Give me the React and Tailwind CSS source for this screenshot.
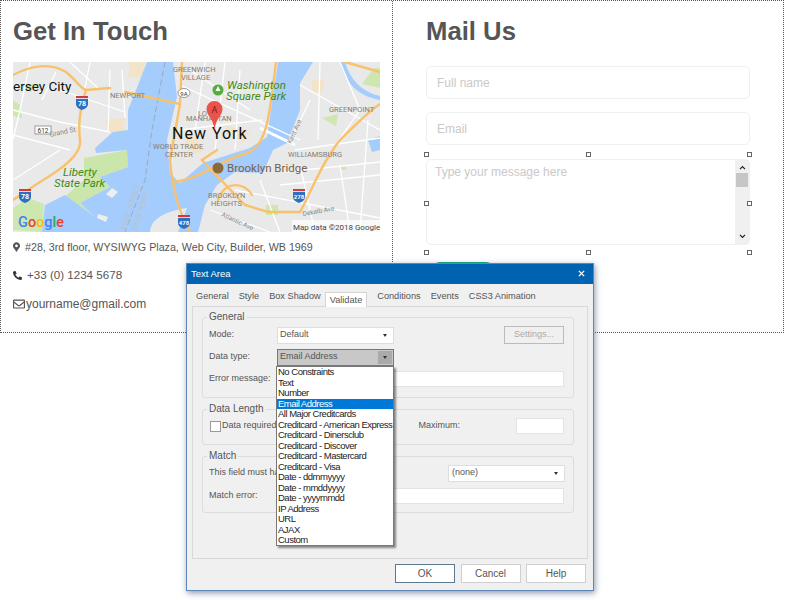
import { FaMapMarkerAlt, FaPhoneAlt, FaRegEnvelope } from 'react-icons/fa';

const dataTypes = [
  'No Constraints', 'Text', 'Number', 'Email Address', 'All Major Creditcards',
  'Creditcard - American Express', 'Creditcard - Dinersclub', 'Creditcard - Discover',
  'Creditcard - Mastercard', 'Creditcard - Visa', 'Date - ddmmyyyy', 'Date - mmddyyyy',
  'Date - yyyymmdd', 'IP Address', 'URL', 'AJAX', 'Custom',
];

const tabs = ['General', 'Style', 'Box Shadow', 'Validate', 'Conditions', 'Events', 'CSS3 Animation'];

function Shield({ x, y, label }) {
  return (
    <g>
      <path d={`M${x} ${y}h12v8c0 3-3 5-6 6c-3-1-6-3-6-6z`} fill="#2f6fc0" />
      <rect x={x} y={y} width="12" height="2" fill="#d23a3a" />
      <rect x={x} y={y + 2} width="12" height="0.8" fill="#fff" />
      <text x={x + 6} y={y + 9.5} fontSize={label.length > 2 ? 6 : 7} fontWeight="700" fill="#ffffff" textAnchor="middle">{label}</text>
    </g>
  );
}

function MapPicture() {
  return (
    <svg viewBox="13 62 367 170" className="w-[367px] h-[170px] block font-['Roboto',sans-serif]">
      <rect x="13" y="62" width="367" height="170" fill="#e9e9e9" />
      {/* parks and built up areas */}
      <path d="M77 218 L62 200 L72 190 L84 180 L84 158 L127 150 L128 167 L100 177 L110 187 L80 203 L95 217 Z" fill="#cbe6ab" />
      <path d="M13 230 L13 208 L28 198 L44 204 L42 232 Z" fill="#cde7b0" />
      <path d="M13 100 L20 105 L22 118 L13 116 Z M20 84 L40 84 L30 92 Z M374 68 L380 68 L380 88 L362 84 Z M322 118 L338 114 L336 126 Z M266 205 L278 205 L278 215 L266 215 Z M340 165 L346 165 L346 170 L340 170 Z" fill="#cfe6b0" />
      <path d="M130 62 L145 62 L143 78 L128 76 Z M105 120 L125 118 L122 140 L108 132 Z M312 80 L324 80 L322 94 L312 92 Z M190 130 L205 150 L195 155 L184 140 Z M225 125 L250 132 L244 142 L228 136 Z" fill="#f3e3c8" />
      {/* water */}
      <path d="M147 62 L140 80 L128 110 L128 130 L113 132 L95 148 L96 153 L127 150 L128 167 L100 177 L110 187 L80 203 L95 217 L65 195 L45 205 L42 232 L198 232 L205 205 L217 185 L235 172 L263 173 L273 150 L287 143 L300 110 L300 83 L313 62 L278 62 L272 103 L267 137 L250 148 L203 163 L180 183 L170 173 L167 140 L177 97 L173 62 Z" fill="#a4ccfd" />
      <path d="M345 62 C350 80 362 92 380 96 L380 100 C358 96 346 84 340 62 Z M368 140 L380 136 L380 150 L372 152 Z" fill="#a4ccfd" />
      <path d="M150 232 C150 222 160 212 187 208 L178 232 Z" fill="#e9e9e9" />
      <path d="M98 214 L108 217 L106 222 L97 218 Z M112 188 L118 192 L112 198 L106 194 Z" fill="#eeeeee" />
      {/* state border */}
      <path d="M165 62 L152 130 L145 180 L125 232" stroke="#9ca9b8" strokeWidth="1" strokeDasharray="6 3" fill="none" />
      {/* streets */}
      <g stroke="#fff" strokeWidth="1.3" fill="none">
        <path d="M13 110 L60 122 L110 132 M30 62 L20 110 L13 140 M60 90 L125 112 M42 100 L56 72 M13 135 L70 150 M110 70 L108 132 M122 70 L125 118 M180 85 L300 140 M190 70 L250 110 M205 62 L195 130 M225 62 L215 150 M240 70 L235 150 M180 130 L262 120 M13 180 L60 150 M70 62 L100 90 M90 62 L85 88" />
        <path d="M300 85 L380 130 M310 100 L290 142 M340 62 L360 110 L332 150 M295 150 L380 138 M285 172 L380 162 M280 185 L380 175 M235 190 L380 218 M260 180 L280 232 M300 165 L315 232 M340 165 L350 232 M210 210 L270 232 M368 120 L360 232 M320 62 L318 140" />
      </g>
      <path d="M260 128 L295 145" stroke="#fff" strokeWidth="3" fill="none" />
      {/* highways */}
      <g stroke="#f8c26c" strokeWidth="2.4" fill="none" strokeLinecap="round">
        <path d="M13 75 C30 66 50 62 66 72 C76 80 82 90 86 90 L110 88" />
        <path d="M86 90 C80 108 78 125 80 140 C82 155 60 170 40 182 L13 200" />
        <path d="M125 92 L180 104 M182 62 L180 104 L170 160 C172 185 178 210 190 232" />
        <path d="M172 182 C200 180 220 160 245 154 C268 148 270 110 276 62" />
        <path d="M202 160 L240 200 L245 205 L268 212 L300 212 C310 195 320 165 340 140 C355 125 370 110 380 104" />
        <path d="M218 200 C225 180 245 182 252 195" />
        <path d="M345 62 L380 72 M217 150 L202 160" />
      </g>
      <Shield x={76} y={96} label="78" />
      <Shield x={19} y={189} label="78" />
      <Shield x={178} y={215} label="478" />
      <Shield x={293} y={189} label="278" />
      <rect x="35" y="126" width="16" height="8" fill="#fff" stroke="#777" strokeWidth="0.7" />
      <text x="43" y="133" fontSize="6.5" fill="#333" textAnchor="middle">612</text>
      <ellipse cx="184" cy="93" rx="6" ry="4.5" fill="#fff" stroke="#777" strokeWidth="0.7" />
      <text x="184" y="96" fontSize="6" fill="#333" textAnchor="middle">9A</text>
      {/* labels */}
      <text x="13" y="91" fontSize="13.5" fill="#111">ersey City</text>
      <g fontSize="7.5" fill="#8a7b6b">
        <text x="110" y="98">NEWPORT</text>
        <text x="173" y="72">GREENWICH</text>
        <text x="181" y="79.5">VILLAGE</text>
        <text x="329" y="112">GREENPOINT</text>
        <text x="288" y="157">WILLIAMSBURG</text>
        <text x="153" y="149">WORLD TRADE</text>
        <text x="165" y="157">CENTER</text>
        <text x="208" y="198">BROOKLYN</text>
        <text x="211" y="206">HEIGHTS</text>
        <text x="198" y="116">LO</text>
        <text x="186" y="121">MANHATTAN</text>
      </g>
      <g fontSize="11.5" fill="#3f8a14" fontStyle="italic">
        <text x="227" y="89">Washington</text>
        <text x="226" y="100">Square Park</text>
        <text x="63" y="176">Liberty</text>
        <text x="54" y="187">State Park</text>
      </g>
      <circle cx="218" cy="90" r="5.5" fill="#4fae3c" />
      <path d="M218 86 l-2.5 5 h5z" fill="#fff" />
      <text x="172" y="139" fontSize="16" fill="#111" letterSpacing="1">New York</text>
      <circle cx="218" cy="168" r="5.5" fill="#8a6a3d" />
      <text x="227" y="172" fontSize="11.5" fill="#76614a">Brooklyn Bridge</text>
      <text x="50" y="137" fontSize="7" fill="#888" transform="rotate(-12 50 137)">Grand St</text>
      <text x="303" y="216" fontSize="6.5" fill="#888" transform="rotate(-10 303 216)">Dekalb Ave</text>
      <text x="221" y="216" fontSize="6.5" fill="#888" transform="rotate(25 221 216)">Atlantic Ave</text>
      <text x="291" y="144" fontSize="6.5" fill="#888" transform="rotate(-65 291 144)">Kent Ave</text>
      <text x="126" y="230" fontSize="8" fill="#b8c4cf" transform="rotate(-72 126 230)">NEW JERSEY</text>
      <text x="137" y="231" fontSize="8" fill="#b8c4cf" transform="rotate(-72 137 231)">NEW YORK</text>
      {/* marker */}
      <path d="M215 163 C215 150 207 147 207 140 a8 8 0 0 1 16 0 C223 147 215 150 215 163 Z" transform="translate(-0.5 -31)" fill="#e8534a" />
      <text x="214.5" y="113" fontSize="9" fill="#7a1f1a" textAnchor="middle">A</text>
      {/* footer */}
      <rect x="292" y="220" width="88" height="12" fill="#fff" fillOpacity="0.7" />
      <text x="293" y="230" fontSize="8" fill="#444">Map data ©2018 Google</text>
      <text x="18" y="227" fontSize="14.5" fontWeight="500">
        <tspan fill="#4285f4">G</tspan><tspan fill="#ea4335">o</tspan><tspan fill="#fbbc05">o</tspan><tspan fill="#4285f4">g</tspan><tspan fill="#34a853">l</tspan><tspan fill="#ea4335">e</tspan>
      </text>
    </svg>
  );
}

function Handle({ className }) {
  return <span className={`absolute w-[5px] h-[5px] border border-[#666] bg-white ${className}`} />;
}

function ContactLine({ icon, children, className }) {
  return (
    <div className={`flex items-center text-[#555] ${className}`}>
      {icon}
      <span>{children}</span>
    </div>
  );
}

function GroupBox({ title, className, children }) {
  return (
    <fieldset className={`border border-[#dcdcdc] rounded-[3px] ml-[9px] mr-[13px] px-[6px] ${className}`}>
      <legend className="-ml-[2px] px-[2px] text-[10px] leading-[10px] text-[#555]">{title}</legend>
      {children}
    </fieldset>
  );
}

function Caret() {
  return <span className="w-0 h-0 border-x-[2.5px] border-x-transparent border-t-[3px] border-t-[#333]" />;
}

function TextArea() {
  return (
    <div className="relative mt-[14px] h-[86px] w-[324px] border border-[#edf1f0] rounded-[5px] flex">
      <div className="flex-1 pl-[8px] pt-[3px] text-[12px] text-[#c9c9c9]">Type your message here</div>
      <div className="w-[14px] bg-[#f0f0f0] flex flex-col items-center justify-between text-[#222]">
        <div className="w-full flex flex-col items-center">
          <svg viewBox="0 0 8 6" className="w-[7px] h-[5px] mt-[5px]"><path d="M1 5 L4 2 L7 5" fill="none" stroke="#222" strokeWidth="1.5" /></svg>
          <div className="w-[12px] h-[14px] bg-[#c6c6c6] mt-[3px]" />
        </div>
        <svg viewBox="0 0 8 6" className="w-[7px] h-[5px] mb-[5px]"><path d="M1 1 L4 4 L7 1" fill="none" stroke="#222" strokeWidth="1.5" /></svg>
      </div>
      <Handle className="-left-[3px] -top-[8px]" />
      <Handle className="left-[159px] -top-[8px]" />
      <Handle className="-right-[3px] -top-[8px]" />
      <Handle className="-left-[3px] top-[41px]" />
      <Handle className="-right-[3px] top-[41px]" />
      <Handle className="-left-[3px] top-[90px]" />
      <Handle className="left-[159px] top-[90px]" />
      <Handle className="-right-[3px] top-[90px]" />
    </div>
  );
}

function Dialog() {
  return (
    <div className="absolute left-[186px] top-[263px] w-[408px] h-[328px] bg-[#f0f0f0] border border-[#5b86b5] shadow-[1px_2px_6px_rgba(40,70,110,0.55)] flex flex-col text-[9px] text-[#555] font-['Liberation_Sans',sans-serif]">
      <div className="h-[20px] bg-[#0063b1] text-white flex items-center justify-between pl-[4px] pr-[8px] shrink-0">
        <span className="text-[9.5px]">Text Area</span>
        <svg viewBox="0 0 8 8" className="w-[7px] h-[7px] mb-[2px]"><path d="M1 1 L7 7 M7 1 L1 7" stroke="#fff" strokeWidth="1.6" /></svg>
      </div>
      <div className="flex items-end h-[22px] pl-[4px] shrink-0">
        {tabs.map((t) => (
          <div
            key={t}
            className={t === 'Validate'
              ? 'h-[15px] mb-[-1px] z-10 bg-white border border-b-0 border-[#d5d5d5] px-[4px] mr-[5px] ml-[-1px] text-[9.2px] leading-[15px] whitespace-nowrap'
              : 'h-[15px] px-[5px] text-[9.2px] leading-[11px] whitespace-nowrap'}
          >
            {t}
          </div>
        ))}
      </div>
      <div className="relative mx-[5px] h-[253px] border border-[#d9d9d9] pt-[5px]">
        <GroupBox title="General" className="h-[86px]">
          <div className="flex items-center h-[18px] mt-[4px]">
            <span className="w-[68px]">Mode:</span>
            <div className="w-[117px] h-[17px] bg-white border border-[#dedede] flex items-center justify-between pl-[2px] pr-[6px]">
              Default<Caret />
            </div>
            <div className="ml-auto w-[60px] h-[18px] mr-[3px] border border-[#bbb] bg-[#f0f0f0] flex items-center justify-center text-[#aaa]">Settings...</div>
          </div>
          <div className="flex items-center h-[18px] mt-[4px]">
            <span className="w-[68px]">Data type:</span>
            <div className="w-[117px] h-[17px] bg-[#c8c8c8] border border-[#777] flex items-center justify-between pl-[2px]">
              Email Address
              <span className="w-[14px] h-[13px] mr-[1px] bg-[#aaa] flex items-center justify-center"><Caret /></span>
            </div>
          </div>
          <div className="flex items-center h-[16px] mt-[5px]">
            <span className="w-[68px] whitespace-nowrap">Error message:</span>
            <div className="w-[287px] h-[16px] bg-white border border-[#e3e3e3]" />
          </div>
        </GroupBox>
        <GroupBox title="Data Length" className="h-[41px] mt-[6px]">
          <div className="flex items-center h-[16px] mt-[4px]">
            <span className="w-[11px] h-[11px] ml-[1px] bg-white border border-[#999] shrink-0" />
            <span className="ml-[1px] whitespace-nowrap">Data required</span>
            <span className="ml-auto mr-[56px]">Maximum:</span>
            <div className="w-[48px] h-[16px] mr-[3px] bg-white border border-[#e3e3e3]" />
          </div>
        </GroupBox>
        <GroupBox title="Match" className="h-[62px] mt-[6px]">
          <div className="flex items-center h-[16px] mt-[4px]">
            <span className="whitespace-nowrap">This field must have</span>
            <div className="ml-auto w-[117px] h-[17px] mr-[2px] bg-white border border-[#dedede] flex items-center justify-between pl-[3px] pr-[6px]">
              (none)<Caret />
            </div>
          </div>
          <div className="flex items-center h-[16px] mt-[7px]">
            <span className="w-[68px]">Match error:</span>
            <div className="w-[287px] h-[16px] bg-white border border-[#e3e3e3]" />
          </div>
        </GroupBox>
        <div className="absolute left-[83px] top-[59px] w-[118px] h-[180px] bg-white border border-[#777] shadow-[2px_2px_2px_rgba(0,0,0,0.45)] text-[9.5px] tracking-[-0.5px] text-[#222]">
          {dataTypes.map((d) => (
            <div key={d} className={d === 'Email Address' ? 'h-[10.5px] leading-[10.5px] pl-[1px] bg-[#0078d7] text-white whitespace-nowrap' : 'h-[10.5px] leading-[10.5px] pl-[1px] whitespace-nowrap'}>{d}</div>
          ))}
        </div>
      </div>
      <div className="flex justify-end gap-[5.5px] pr-[7px] pt-[5px]">
        <div className="w-[60px] h-[19px] bg-white border border-[#5f7892] flex items-center justify-center text-[10px]">OK</div>
        <div className="w-[60px] h-[19px] bg-white border border-[#cfcfcf] flex items-center justify-center text-[10px]">Cancel</div>
        <div className="w-[60px] h-[19px] bg-white border border-[#cfcfcf] flex items-center justify-center text-[10px]">Help</div>
      </div>
    </div>
  );
}

export default function App() {
  return (
    <div className="relative w-[800px] h-[600px] bg-white font-['Liberation_Sans',sans-serif]">
      <div className="flex w-[784px] h-[333px] border border-dotted border-[#555]">
        {/* Left column */}
        <div className="w-[392px] border-r border-dotted border-[#555] pl-[12px]">
          <h2 className="mt-[15px] h-[31px] text-[25.7px] leading-[31px] font-bold text-[#555]">Get In Touch</h2>
          <div className="mt-[15px]"><MapPicture /></div>
          <ContactLine className="mt-[8px] h-[14px] text-[10.7px]" icon={<FaMapMarkerAlt className="w-[7px] h-[10px] mr-[5px]" />}>
            #28, 3rd floor, WYSIWYG Plaza, Web City, Builder, WB 1969
          </ContactLine>
          <ContactLine className="mt-[14px] h-[14px] text-[11.6px]" icon={<FaPhoneAlt className="w-[9px] h-[9px] mr-[5px] text-[#333]" />}>
            +33 (0) 1234 5678
          </ContactLine>
          <ContactLine className="mt-[15px] h-[14px] text-[12px]" icon={<FaRegEnvelope className="w-[12px] h-[12px] mr-[1px]" />}>
            yourname@gmail.com
          </ContactLine>
        </div>
        {/* Right column */}
        <div className="flex-1 pl-[33px]">
          <h2 className="mt-[15px] h-[31px] text-[25.7px] leading-[31px] font-bold text-[#555]">Mail Us</h2>
          <div className="mt-[19px] w-[324px] h-[33px] border border-[#edf1f0] rounded-[5px] pl-[10px] flex items-center text-[12px] text-[#c9c9c9]">Full name</div>
          <div className="mt-[13px] w-[324px] h-[33px] border border-[#edf1f0] rounded-[5px] pl-[10px] flex items-center text-[12px] text-[#c9c9c9]">Email</div>
          <TextArea />
          <div className="mt-[17px] ml-[6px] w-[62px] h-[8px] rounded-t-[8px] bg-[#1aa58a]" />
        </div>
      </div>
      <Dialog />
    </div>
  );
}
